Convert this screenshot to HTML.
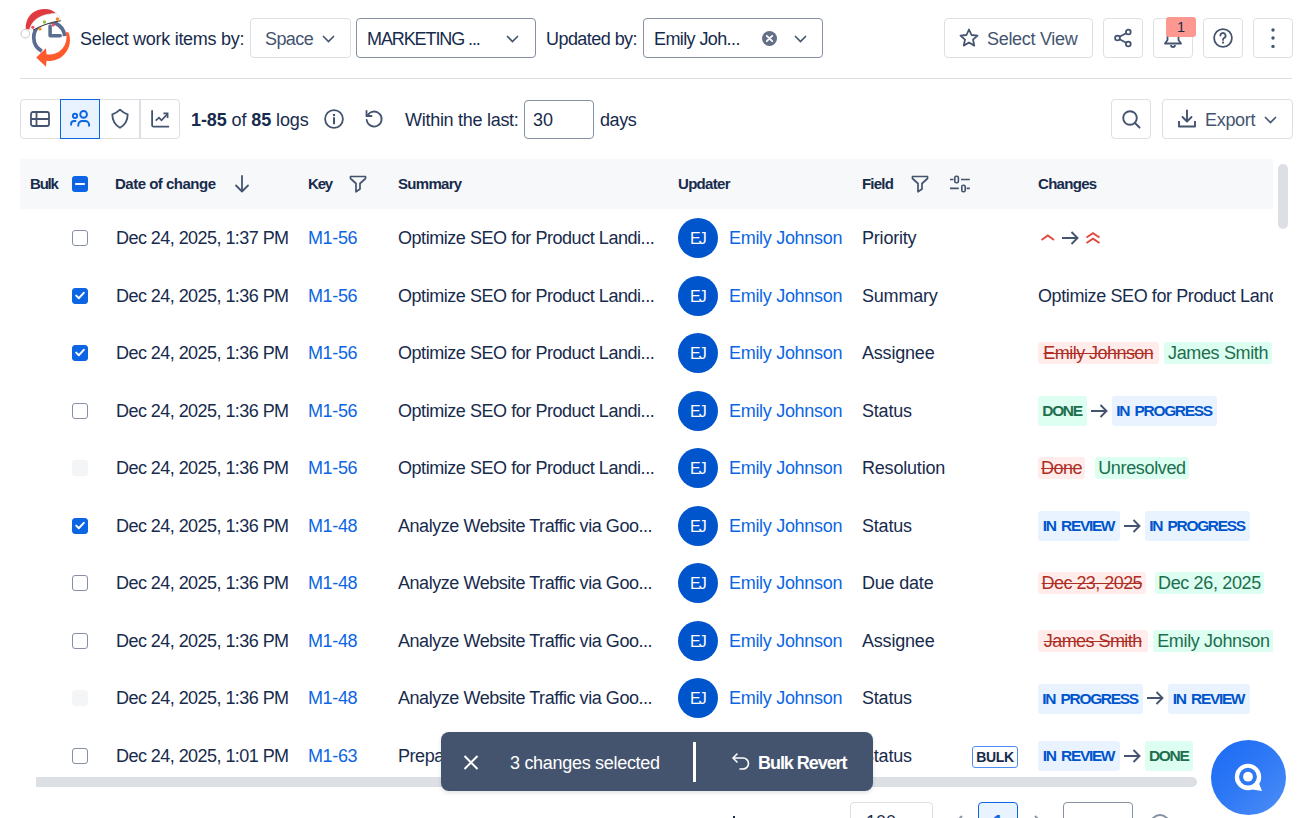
<!DOCTYPE html>
<html><head><meta charset="utf-8">
<style>
*{box-sizing:border-box;margin:0;padding:0}
html,body{width:1302px;height:818px;overflow:hidden;background:#fff}
body{position:relative;font-family:"Liberation Sans",sans-serif;color:#172B4D;font-size:18px}
.a{position:absolute}
.t{position:absolute;white-space:nowrap;line-height:20px;height:20px}
.box{position:absolute;border:1px solid #DCDFE4;border-radius:4px;background:#fff}
.dk{border-color:#8590A2}
svg{position:absolute;overflow:visible}
.hd{position:absolute;white-space:nowrap;font-weight:700;font-size:15px;line-height:18px;top:175px;letter-spacing:-0.5px}
.dt{letter-spacing:-0.55px}.ky{letter-spacing:-0.37px}.sm{letter-spacing:-0.45px}.nm{letter-spacing:-0.3px}.fl{letter-spacing:-0.2px}.ct{letter-spacing:-0.4px}
.cb{position:absolute;left:72px;width:16px;height:16px;border:1.5px solid #8590A2;border-radius:3px;background:#fff}
.cb.on{background:#0C66E4;border-color:#0C66E4}
.cb.dis{background:#F4F5F7;border-color:#F4F5F7}
.av{position:absolute;left:678px;width:40px;height:40px;border-radius:50%;background:#0055CC;color:#fff;font-size:16px;line-height:41px;text-align:center;letter-spacing:-1.8px;text-indent:-1px}
.lnk{color:#0C66E4}
.lz{position:absolute;height:22px;line-height:22px;padding:0 4px;border-radius:3px;white-space:nowrap;font-size:18px;letter-spacing:-0.35px}
.rm{background:#FFECEB;color:#AE2E24;text-decoration:line-through;letter-spacing:-0.55px}
.ad{background:#DCFFF1;color:#216E4E}
.st{position:absolute;height:30px;line-height:30px;padding:0 5px;border-radius:3px;white-space:nowrap;font-size:15.5px;font-weight:700;letter-spacing:-1.35px;word-spacing:2.5px;text-align:center;text-indent:-1px}
.inf{background:#E9F2FF;color:#0055CC}
.suc{background:#DCFFF1;color:#216E4E}
</style></head><body>

<!-- LOGO -->
<svg style="left:0;top:0" width="80" height="80" viewBox="0 0 80 80">
  <path d="M41.8 51.06 A15.5 15.5 0 1 1 64.7 36.1" fill="none" stroke="#5A6D91" stroke-width="3.7"/>
  <path d="M50.1 25.9 V35.75 H60.2" fill="none" stroke="#5A6D91" stroke-width="3.5" stroke-linecap="round" stroke-linejoin="round"/>
  <path d="M68.5 32.3 A21 21 0 0 1 46.5 60.85 L46 66.7 L36.2 57.6 L46 48.2 L46.5 54.2 A17 17 0 0 0 65.7 32.3 Z" fill="#FF5A2C"/>
  <path d="M25.7 28.7 C25.5 20 30 12.5 38 10 C44 8 52 8.5 55.9 13.3 C52 13.8 48 14 44 15.2 C37 17.5 31.5 22 29.5 29.5 Z" fill="#E0393E"/>
  <path d="M29.5 29.5 C31.5 22 37 17.5 44 15.2 C48 14 52 13.8 55.9 13.3 C58.5 15 60.2 17.5 60.7 20.7 C50 22 40 26 33 30.2 Z" fill="#fff" stroke="#d0d0d0" stroke-width="0.6"/>
  <path d="M33 30.2 Q45 23.2 60.7 20.7" fill="none" stroke="#3a3232" stroke-width="1"/>
  <circle cx="25.3" cy="33.7" r="4.3" fill="#fff" stroke="#c8c8c8" stroke-width="1"/>
  <circle cx="32.8" cy="27.3" r="1.6" fill="#E84A6F"/>
  <circle cx="40" cy="28.9" r="1.6" fill="#F5851F"/>
  <circle cx="44.4" cy="22" r="1.7" fill="#8CC63F"/>
  <circle cx="53.2" cy="24.9" r="1.6" fill="#E84A6F"/>
  <circle cx="57.4" cy="19" r="1.7" fill="#F5851F"/>
</svg>

<div class="t" style="left:80px;top:29px;letter-spacing:-0.28px">Select work items by:</div>

<div class="box" style="left:250px;top:18px;width:101px;height:40px"></div>
<div class="t" style="left:265px;top:29px;letter-spacing:-0.6px;color:#44546F">Space</div>
<svg style="left:322px;top:35px" width="13" height="8" viewBox="0 0 13 8"><path d="M1 1 L6.5 6.5 L12 1" fill="none" stroke="#44546F" stroke-width="1.6"/></svg>

<div class="box dk" style="left:356px;top:18px;width:180px;height:40px"></div>
<div class="t" style="left:367px;top:29px;letter-spacing:-1.1px">MARKETING ...</div>
<svg style="left:506px;top:35px" width="13" height="8" viewBox="0 0 13 8"><path d="M1 1 L6.5 6.5 L12 1" fill="none" stroke="#44546F" stroke-width="1.6"/></svg>

<div class="t" style="left:546px;top:29px;letter-spacing:-0.55px">Updated by:</div>
<div class="box dk" style="left:643px;top:18px;width:180px;height:40px"></div>
<div class="t" style="left:654px;top:29px;letter-spacing:-0.6px">Emily Joh...</div>
<svg style="left:762px;top:31px" width="15" height="15" viewBox="0 0 15 15"><circle cx="7.5" cy="7.5" r="7.5" fill="#626F86"/><path d="M4.8 4.8 L10.2 10.2 M10.2 4.8 L4.8 10.2" stroke="#fff" stroke-width="1.8" stroke-linecap="round"/></svg>
<svg style="left:794px;top:35px" width="13" height="8" viewBox="0 0 13 8"><path d="M1 1 L6.5 6.5 L12 1" fill="none" stroke="#44546F" stroke-width="1.6"/></svg>

<div class="box" style="left:944px;top:18px;width:149px;height:40px"></div>
<svg style="left:959px;top:28px" width="20" height="20" viewBox="0 0 20 20"><path d="M10 1.5 L12.5 7 L18.5 7.6 L14 11.6 L15.3 17.6 L10 14.5 L4.7 17.6 L6 11.6 L1.5 7.6 L7.5 7 Z" fill="none" stroke="#44546F" stroke-width="1.8" stroke-linejoin="round"/></svg>
<div class="t" style="left:987px;top:29px;letter-spacing:-0.3px;color:#44546F">Select View</div>

<div class="box" style="left:1103px;top:18px;width:40px;height:40px"></div>
<svg style="left:1113px;top:28px" width="20" height="20" viewBox="0 0 20 20"><circle cx="15.3" cy="4" r="2.4" fill="none" stroke="#44546F" stroke-width="1.8"/><circle cx="4.5" cy="10" r="2.4" fill="none" stroke="#44546F" stroke-width="1.8"/><circle cx="15.3" cy="16" r="2.4" fill="none" stroke="#44546F" stroke-width="1.8"/><path d="M6.6 8.8 L13.2 5.2 M6.6 11.2 L13.2 14.8" stroke="#44546F" stroke-width="1.8"/></svg>

<div class="box" style="left:1153px;top:18px;width:40px;height:40px"></div>
<svg style="left:1163px;top:28px" width="20" height="20" viewBox="0 0 20 20"><path d="M2 15.5 L4.5 12 V8 A5.5 5.5 0 0 1 15.5 8 V12 L18 15.5 Z" fill="none" stroke="#44546F" stroke-width="1.8" stroke-linejoin="round"/><path d="M8 17 A2 2 0 0 0 12 17" fill="none" stroke="#44546F" stroke-width="1.8"/></svg>
<div class="a" style="left:1166px;top:17px;width:30px;height:20px;background:#FD9891;border-radius:3px;color:#172B4D;font-size:14.5px;line-height:20px;text-align:center">1</div>

<div class="box" style="left:1203px;top:18px;width:40px;height:40px"></div>
<svg style="left:1213px;top:28px" width="20" height="20" viewBox="0 0 20 20"><circle cx="10" cy="10" r="8.9" fill="none" stroke="#44546F" stroke-width="1.8"/><path d="M7.4 7.6 A2.6 2.6 0 1 1 11 10 C10.2 10.4 10 11 10 12" fill="none" stroke="#44546F" stroke-width="1.8" stroke-linecap="round"/><circle cx="10" cy="14.6" r="1.1" fill="#44546F"/></svg>

<div class="box" style="left:1253px;top:18px;width:40px;height:40px"></div>
<svg style="left:1263px;top:28px" width="20" height="20" viewBox="0 0 20 20"><circle cx="10" cy="2" r="1.7" fill="#44546F"/><circle cx="10" cy="10" r="1.7" fill="#44546F"/><circle cx="10" cy="18.4" r="1.7" fill="#44546F"/></svg>

<div class="a" style="left:20px;top:78px;width:1272px;height:1px;background:#DCDFE4"></div>

<!-- TOOLBAR 2 -->
<div class="box" style="left:20px;top:99px;width:160px;height:40px"></div>
<div class="a" style="left:139px;top:100px;width:2px;height:38px;background:#DCDFE4"></div>
<div class="a" style="left:60px;top:99px;width:40px;height:40px;border:1.5px solid #0C66E4;background:#E9F2FF"></div>
<!-- table icon -->
<svg style="left:30px;top:111px" width="20" height="16" viewBox="0 0 20 16"><rect x="1" y="1" width="18" height="14" rx="2" fill="none" stroke="#44546F" stroke-width="1.8"/><path d="M1 8 H19 M6.5 1 V15" stroke="#44546F" stroke-width="1.8"/></svg>
<!-- people icon -->
<svg style="left:70px;top:110px" width="20" height="17" viewBox="0 0 20 17"><circle cx="5" cy="5.9" r="2.1" fill="none" stroke="#0C66E4" stroke-width="1.9"/><circle cx="13.6" cy="4.4" r="3.35" fill="none" stroke="#0C66E4" stroke-width="1.9"/><path d="M1.1 14.8 V14 A3 3 0 0 1 4.1 11 H5.5" fill="none" stroke="#0C66E4" stroke-width="1.9" stroke-linecap="round"/><path d="M8.3 15.8 V15 A4 4 0 0 1 12.3 11 H15.1 A4 4 0 0 1 19.1 15 V15.8" fill="none" stroke="#0C66E4" stroke-width="1.9" stroke-linecap="round"/></svg>
<!-- shield -->
<svg style="left:110px;top:108px" width="20" height="22" viewBox="0 0 20 22"><path d="M10 1.6 C8 3.6 5.2 5.4 2.3 6.3 C2.3 12.5 4.8 16.8 10 19.8 C15.2 16.8 17.7 12.5 17.7 6.3 C14.8 5.4 12 3.6 10 1.6 Z" fill="none" stroke="#44546F" stroke-width="1.8" stroke-linejoin="round"/></svg>
<!-- chart -->
<svg style="left:150px;top:110px" width="20" height="19" viewBox="0 0 20 19"><path d="M2.1 0.8 V15.2 A1.5 1.5 0 0 0 3.6 16.7 H18.4" fill="none" stroke="#44546F" stroke-width="1.8" stroke-linecap="round"/><path d="M5.7 10.6 L9 7.6 L11.5 10.3 L17.3 4.2" fill="none" stroke="#44546F" stroke-width="1.7"/><path d="M13.4 3.3 H17.6 V8.1" fill="none" stroke="#44546F" stroke-width="1.7"/></svg>

<div class="t" style="left:191px;top:110px;letter-spacing:-0.1px"><b>1-85</b> of <b>85</b> logs</div>
<svg style="left:324px;top:109px" width="20" height="20" viewBox="0 0 20 20"><circle cx="10" cy="10" r="8.9" fill="none" stroke="#44546F" stroke-width="1.8"/><path d="M10 9 V14.5" stroke="#44546F" stroke-width="2" stroke-linecap="round"/><circle cx="10" cy="6" r="1.2" fill="#44546F"/></svg>
<svg style="left:364px;top:109px" width="20" height="20" viewBox="0 0 20 20"><path d="M3.5 6.5 A7.5 7.5 0 1 1 2.7 11" fill="none" stroke="#44546F" stroke-width="1.8" stroke-linecap="round"/><path d="M2.5 2 V7 H7.5" fill="none" stroke="#44546F" stroke-width="1.8" stroke-linecap="round" stroke-linejoin="round"/></svg>

<div class="t" style="left:405px;top:110px;letter-spacing:-0.28px">Within the last:</div>
<div class="box dk" style="left:524px;top:100px;width:70px;height:39px"></div>
<div class="t" style="left:533px;top:110px">30</div>
<div class="t" style="left:600px;top:110px;letter-spacing:-0.4px">days</div>

<div class="box" style="left:1111px;top:99px;width:40px;height:40px"></div>
<svg style="left:1121px;top:109px" width="20" height="20" viewBox="0 0 20 20"><circle cx="9" cy="9" r="6.8" fill="none" stroke="#44546F" stroke-width="1.9"/><path d="M14 14 L18.5 18.5" stroke="#44546F" stroke-width="2" stroke-linecap="round"/></svg>
<div class="box" style="left:1162px;top:99px;width:131px;height:40px"></div>
<svg style="left:1177px;top:109px" width="20" height="20" viewBox="0 0 20 20"><path d="M10 1.5 V12 M5.5 8 L10 12.5 L14.5 8" fill="none" stroke="#44546F" stroke-width="1.9" stroke-linecap="round" stroke-linejoin="round"/><path d="M2 12 V17.5 H18 V12" fill="none" stroke="#44546F" stroke-width="1.9" stroke-linejoin="round"/></svg>
<div class="t" style="left:1205px;top:110px;letter-spacing:-0.3px;color:#44546F">Export</div>
<svg style="left:1264px;top:116px" width="13" height="8" viewBox="0 0 13 8"><path d="M1 1 L6.5 6.5 L12 1" fill="none" stroke="#44546F" stroke-width="1.6"/></svg>

<!-- TABLE HEADER -->
<div class="a" style="left:20px;top:159px;width:1253px;height:50px;background:#F7F8F9"></div>
<div class="hd" style="left:30px;letter-spacing:-1.2px">Bulk</div>
<div class="a" style="left:72px;top:176px;width:16px;height:16px;background:#0C66E4;border-radius:3px"><div class="a" style="left:3px;top:6.8px;width:10px;height:2.4px;background:#fff;border-radius:1px"></div></div>
<div class="hd" style="left:115px">Date of change</div>
<svg style="left:234px;top:175px" width="16" height="18" viewBox="0 0 16 18"><path d="M8 1 V16.5 M2 10.5 L8 16.5 L14 10.5" fill="none" stroke="#44546F" stroke-width="1.8" stroke-linecap="round" stroke-linejoin="round"/></svg>
<div class="hd" style="left:308px;letter-spacing:-1.2px">Key</div>
<svg style="left:349px;top:175px" width="18" height="18" viewBox="0 0 18 18"><path d="M1.5 1.5 H16.5 V3.5 L11 8.5 V14 L7 16.8 V8.5 L1.5 3.5 Z" fill="none" stroke="#44546F" stroke-width="1.7" stroke-linejoin="round"/></svg>
<div class="hd" style="left:398px;letter-spacing:-0.7px">Summary</div>
<div class="hd" style="left:678px;letter-spacing:-0.7px">Updater</div>
<div class="hd" style="left:862px;letter-spacing:-0.8px">Field</div>
<svg style="left:911px;top:175px" width="18" height="18" viewBox="0 0 18 18"><path d="M1.5 1.5 H16.5 V3.5 L11 8.5 V14 L7 16.8 V8.5 L1.5 3.5 Z" fill="none" stroke="#44546F" stroke-width="1.7" stroke-linejoin="round"/></svg>
<svg style="left:949px;top:175px" width="22" height="18" viewBox="0 0 22 18"><path d="M1 4.5 H4.6 M12 4.5 H20.8 M1 13.3 H9.8 M17.6 13.3 H20.8" stroke="#44546F" stroke-width="1.7"/><rect x="5.8" y="1.3" width="3.6" height="6.4" rx="1.5" fill="none" stroke="#44546F" stroke-width="1.6"/><rect x="12.8" y="10.3" width="3.4" height="6.4" rx="1.5" fill="none" stroke="#44546F" stroke-width="1.6"/></svg>
<div class="hd" style="left:1038px;letter-spacing:-0.7px">Changes</div>
<div class="a" style="left:1278px;top:164px;width:10px;height:65px;background:#DCDFE4;border-radius:5px"></div>

<!-- ROWS -->
<div class="cb" style="top:230.0px"></div>
<div class="t dt" style="left:116px;top:228.0px">Dec 24, 2025, 1:37 PM</div>
<div class="t lnk ky" style="left:308px;top:228.0px">M1-56</div>
<div class="t sm" style="left:398px;top:228.0px">Optimize SEO for Product Landi...</div>
<div class="av" style="top:218.0px">EJ</div>
<div class="t lnk nm" style="left:729px;top:228.0px">Emily Johnson</div>
<div class="t fl" style="left:862px;top:228.0px">Priority</div>
<svg style="left:1040px;top:234.0px" width="16" height="8" viewBox="0 0 16 8"><path d="M1.5 6 L7.8 1.5 L14 6" fill="none" stroke="#E2483D" stroke-width="1.9"/></svg>
<svg style="left:1061px;top:231.0px" width="18" height="14" viewBox="0 0 18 14"><path d="M1 7 H16.5 M10.5 1 L16.5 7 L10.5 13" fill="none" stroke="#44546F" stroke-width="1.9" stroke-linejoin="miter"/></svg>
<svg style="left:1085px;top:232.0px" width="16" height="13" viewBox="0 0 16 13"><path d="M1.5 5.5 L8 1.2 L14.5 5.5 M1.5 11 L8 6.7 L14.5 11" fill="none" stroke="#E2483D" stroke-width="1.9"/></svg>
<div class="cb on" style="top:287.5px"><svg style="left:1.5px;top:2px" width="10" height="9" viewBox="0 0 10 9"><path d="M1.2 4.6 L3.9 7.2 L8.8 1.8" fill="none" stroke="#fff" stroke-width="2" stroke-linecap="round" stroke-linejoin="round"/></svg></div>
<div class="t dt" style="left:116px;top:285.5px">Dec 24, 2025, 1:36 PM</div>
<div class="t lnk ky" style="left:308px;top:285.5px">M1-56</div>
<div class="t sm" style="left:398px;top:285.5px">Optimize SEO for Product Landi...</div>
<div class="av" style="top:275.5px">EJ</div>
<div class="t lnk nm" style="left:729px;top:285.5px">Emily Johnson</div>
<div class="t fl" style="left:862px;top:285.5px">Summary</div>
<div class="a" style="left:1038px;top:285.5px;width:235px;height:22px;overflow:hidden"><div class="t ct">Optimize SEO for Product Landing Page</div></div>
<div class="cb on" style="top:345.0px"><svg style="left:1.5px;top:2px" width="10" height="9" viewBox="0 0 10 9"><path d="M1.2 4.6 L3.9 7.2 L8.8 1.8" fill="none" stroke="#fff" stroke-width="2" stroke-linecap="round" stroke-linejoin="round"/></svg></div>
<div class="t dt" style="left:116px;top:343.0px">Dec 24, 2025, 1:36 PM</div>
<div class="t lnk ky" style="left:308px;top:343.0px">M1-56</div>
<div class="t sm" style="left:398px;top:343.0px">Optimize SEO for Product Landi...</div>
<div class="av" style="top:333.0px">EJ</div>
<div class="t lnk nm" style="left:729px;top:343.0px">Emily Johnson</div>
<div class="t fl" style="left:862px;top:343.0px">Assignee</div>
<div class="lz rm" style="left:1038px;top:342.0px;width:120.6px;padding:0;text-align:center">Emily Johnson</div>
<div class="a" style="left:1164px;top:342.0px;width:109px;height:22px;overflow:hidden"><div class="lz ad" style="left:0;top:0;">James Smith</div></div>
<div class="cb" style="top:402.5px"></div>
<div class="t dt" style="left:116px;top:400.5px">Dec 24, 2025, 1:36 PM</div>
<div class="t lnk ky" style="left:308px;top:400.5px">M1-56</div>
<div class="t sm" style="left:398px;top:400.5px">Optimize SEO for Product Landi...</div>
<div class="av" style="top:390.5px">EJ</div>
<div class="t lnk nm" style="left:729px;top:400.5px">Emily Johnson</div>
<div class="t fl" style="left:862px;top:400.5px">Status</div>
<div class="st suc" style="left:1038px;top:396.0px;width:49px">DONE</div>
<svg style="left:1090px;top:403.5px" width="18" height="14" viewBox="0 0 18 14"><path d="M1 7 H16.5 M10.5 1 L16.5 7 L10.5 13" fill="none" stroke="#44546F" stroke-width="1.9" stroke-linejoin="miter"/></svg>
<div class="st inf" style="left:1112px;top:396.0px;width:105px">IN PROGRESS</div>
<div class="cb dis" style="top:460.0px"></div>
<div class="t dt" style="left:116px;top:458.0px">Dec 24, 2025, 1:36 PM</div>
<div class="t lnk ky" style="left:308px;top:458.0px">M1-56</div>
<div class="t sm" style="left:398px;top:458.0px">Optimize SEO for Product Landi...</div>
<div class="av" style="top:448.0px">EJ</div>
<div class="t lnk nm" style="left:729px;top:458.0px">Emily Johnson</div>
<div class="t fl" style="left:862px;top:458.0px">Resolution</div>
<div class="lz rm" style="left:1038px;top:457.0px;width:47px;padding:0;text-align:center">Done</div>
<div class="a" style="left:1095.3px;top:457.0px;width:177.70000000000005px;height:22px;overflow:hidden"><div class="lz ad" style="left:0;top:0;width:93.4px;padding:0;text-align:center;">Unresolved</div></div>
<div class="cb on" style="top:517.5px"><svg style="left:1.5px;top:2px" width="10" height="9" viewBox="0 0 10 9"><path d="M1.2 4.6 L3.9 7.2 L8.8 1.8" fill="none" stroke="#fff" stroke-width="2" stroke-linecap="round" stroke-linejoin="round"/></svg></div>
<div class="t dt" style="left:116px;top:515.5px">Dec 24, 2025, 1:36 PM</div>
<div class="t lnk ky" style="left:308px;top:515.5px">M1-48</div>
<div class="t sm" style="left:398px;top:515.5px">Analyze Website Traffic via Goo...</div>
<div class="av" style="top:505.5px">EJ</div>
<div class="t lnk nm" style="left:729px;top:515.5px">Emily Johnson</div>
<div class="t fl" style="left:862px;top:515.5px">Status</div>
<div class="st inf" style="left:1038px;top:511.0px;width:82px">IN REVIEW</div>
<svg style="left:1123px;top:518.5px" width="18" height="14" viewBox="0 0 18 14"><path d="M1 7 H16.5 M10.5 1 L16.5 7 L10.5 13" fill="none" stroke="#44546F" stroke-width="1.9" stroke-linejoin="miter"/></svg>
<div class="st inf" style="left:1145px;top:511.0px;width:105px">IN PROGRESS</div>
<div class="cb" style="top:575.0px"></div>
<div class="t dt" style="left:116px;top:573.0px">Dec 24, 2025, 1:36 PM</div>
<div class="t lnk ky" style="left:308px;top:573.0px">M1-48</div>
<div class="t sm" style="left:398px;top:573.0px">Analyze Website Traffic via Goo...</div>
<div class="av" style="top:563.0px">EJ</div>
<div class="t lnk nm" style="left:729px;top:573.0px">Emily Johnson</div>
<div class="t fl" style="left:862px;top:573.0px">Due date</div>
<div class="lz rm" style="left:1038px;top:572.0px;width:107.7px;padding:0;text-align:center">Dec 23, 2025</div>
<div class="a" style="left:1155.1px;top:572.0px;width:117.90000000000009px;height:22px;overflow:hidden"><div class="lz ad" style="left:0;top:0;width:108.7px;padding:0;text-align:center;">Dec 26, 2025</div></div>
<div class="cb" style="top:632.5px"></div>
<div class="t dt" style="left:116px;top:630.5px">Dec 24, 2025, 1:36 PM</div>
<div class="t lnk ky" style="left:308px;top:630.5px">M1-48</div>
<div class="t sm" style="left:398px;top:630.5px">Analyze Website Traffic via Goo...</div>
<div class="av" style="top:620.5px">EJ</div>
<div class="t lnk nm" style="left:729px;top:630.5px">Emily Johnson</div>
<div class="t fl" style="left:862px;top:630.5px">Assignee</div>
<div class="lz rm" style="left:1038px;top:629.5px;width:109.5px;padding:0;text-align:center">James Smith</div>
<div class="a" style="left:1153.2px;top:629.5px;width:119.79999999999995px;height:22px;overflow:hidden"><div class="lz ad" style="left:0;top:0;">Emily Johnson</div></div>
<div class="cb dis" style="top:690.0px"></div>
<div class="t dt" style="left:116px;top:688.0px">Dec 24, 2025, 1:36 PM</div>
<div class="t lnk ky" style="left:308px;top:688.0px">M1-48</div>
<div class="t sm" style="left:398px;top:688.0px">Analyze Website Traffic via Goo...</div>
<div class="av" style="top:678.0px">EJ</div>
<div class="t lnk nm" style="left:729px;top:688.0px">Emily Johnson</div>
<div class="t fl" style="left:862px;top:688.0px">Status</div>
<div class="st inf" style="left:1038px;top:683.5px;width:105px">IN PROGRESS</div>
<svg style="left:1146px;top:691.0px" width="18" height="14" viewBox="0 0 18 14"><path d="M1 7 H16.5 M10.5 1 L16.5 7 L10.5 13" fill="none" stroke="#44546F" stroke-width="1.9" stroke-linejoin="miter"/></svg>
<div class="st inf" style="left:1168px;top:683.5px;width:82px">IN REVIEW</div>
<div class="cb" style="top:747.5px"></div>
<div class="t dt" style="left:116px;top:745.5px">Dec 24, 2025, 1:01 PM</div>
<div class="t lnk ky" style="left:308px;top:745.5px">M1-63</div>
<div class="t sm" style="left:398px;top:745.5px">Prepare Q1 Marketing Campaign...</div>
<div class="av" style="top:735.5px">EJ</div>
<div class="t lnk nm" style="left:729px;top:745.5px">Emily Johnson</div>
<div class="t fl" style="left:862px;top:745.5px">Status</div>
<div class="st inf" style="left:1038px;top:741.0px;width:82px">IN REVIEW</div>
<svg style="left:1123px;top:748.5px" width="18" height="14" viewBox="0 0 18 14"><path d="M1 7 H16.5 M10.5 1 L16.5 7 L10.5 13" fill="none" stroke="#44546F" stroke-width="1.9" stroke-linejoin="miter"/></svg>
<div class="st suc" style="left:1145px;top:741.0px;width:48px">DONE</div>
<div class="a" style="left:972px;top:745.5px;width:46px;height:22px;border:1px solid #4C8DF6;border-radius:3px;font-size:14px;font-weight:700;line-height:20px;text-align:center;letter-spacing:-0.3px">BULK</div>


<!-- H SCROLLBAR -->
<div class="a" style="left:36px;top:777px;width:1161px;height:10px;background:#DCDFE4;border-radius:0 5px 5px 0"></div>

<!-- PAGINATION (partial) -->
<div class="a" style="left:732.5px;top:815.5px;width:2px;height:3px;background:#172B4D"></div>
<div class="box" style="left:850px;top:802px;width:83px;height:40px"></div>
<div class="t" style="left:866px;top:812px">100</div>
<svg style="left:954px;top:815px" width="12" height="12" viewBox="0 0 12 12"><path d="M8 1 L3 6 L8 11" fill="none" stroke="#8590A2" stroke-width="1.8"/></svg>
<div class="a" style="left:978px;top:802px;width:40px;height:40px;border:1.5px solid #0C66E4;border-radius:4px;background:#E9F2FF;color:#0C66E4;font-weight:700;text-align:center;line-height:38px">1</div>
<svg style="left:1031px;top:815px" width="12" height="12" viewBox="0 0 12 12"><path d="M4 1 L9 6 L4 11" fill="none" stroke="#8590A2" stroke-width="1.8"/></svg>
<div class="box dk" style="left:1063px;top:802px;width:70px;height:40px"></div>
<div class="a" style="left:1150px;top:814px;width:20px;height:20px;border-radius:50%;border:2px solid #8590A2"></div>

<!-- TOAST -->
<div class="a" style="left:441px;top:732px;width:432px;height:59px;background:#44546F;border-radius:8px;box-shadow:0 2px 4px rgba(9,30,66,0.12)"></div>
<svg style="left:463px;top:754.5px" width="16" height="15" viewBox="0 0 16 15"><path d="M1.5 1 L14.5 14 M14.5 1 L1.5 14" stroke="#fff" stroke-width="2"/></svg>
<div class="t" style="left:510px;top:753px;color:#fff;letter-spacing:-0.3px">3 changes selected</div>
<div class="a" style="left:693px;top:742px;width:3px;height:40px;background:#fff"></div>
<svg style="left:731px;top:752px" width="20" height="18" viewBox="0 0 20 18"><path d="M6 2 L2 6 L6 10" fill="none" stroke="#fff" stroke-width="1.6" stroke-linecap="round" stroke-linejoin="round"/><path d="M2.5 6 H12 A5.5 5.5 0 0 1 12 17 H9" fill="none" stroke="#fff" stroke-width="1.6" stroke-linecap="round"/></svg>
<div class="t" style="left:758px;top:753px;color:#fff;font-weight:700;letter-spacing:-1.05px">Bulk Revert</div>

<!-- FAB -->
<div class="a" style="left:1211px;top:740px;width:75px;height:75px;border-radius:50%;background:linear-gradient(135deg,#1A6AF4 0%,#2F79F6 50%,#4F8FF7 100%)"></div>
<svg style="left:1234px;top:763px" width="30" height="30" viewBox="0 0 30 30"><circle cx="14" cy="14" r="13.2" fill="#fff"/><path d="M24.5 19 L28 28 L18.5 26.5 Z" fill="#fff"/><circle cx="14" cy="13.7" r="8.9" fill="#2F78F6"/><circle cx="14" cy="13.7" r="4.9" fill="#fff"/></svg>

</body></html>
